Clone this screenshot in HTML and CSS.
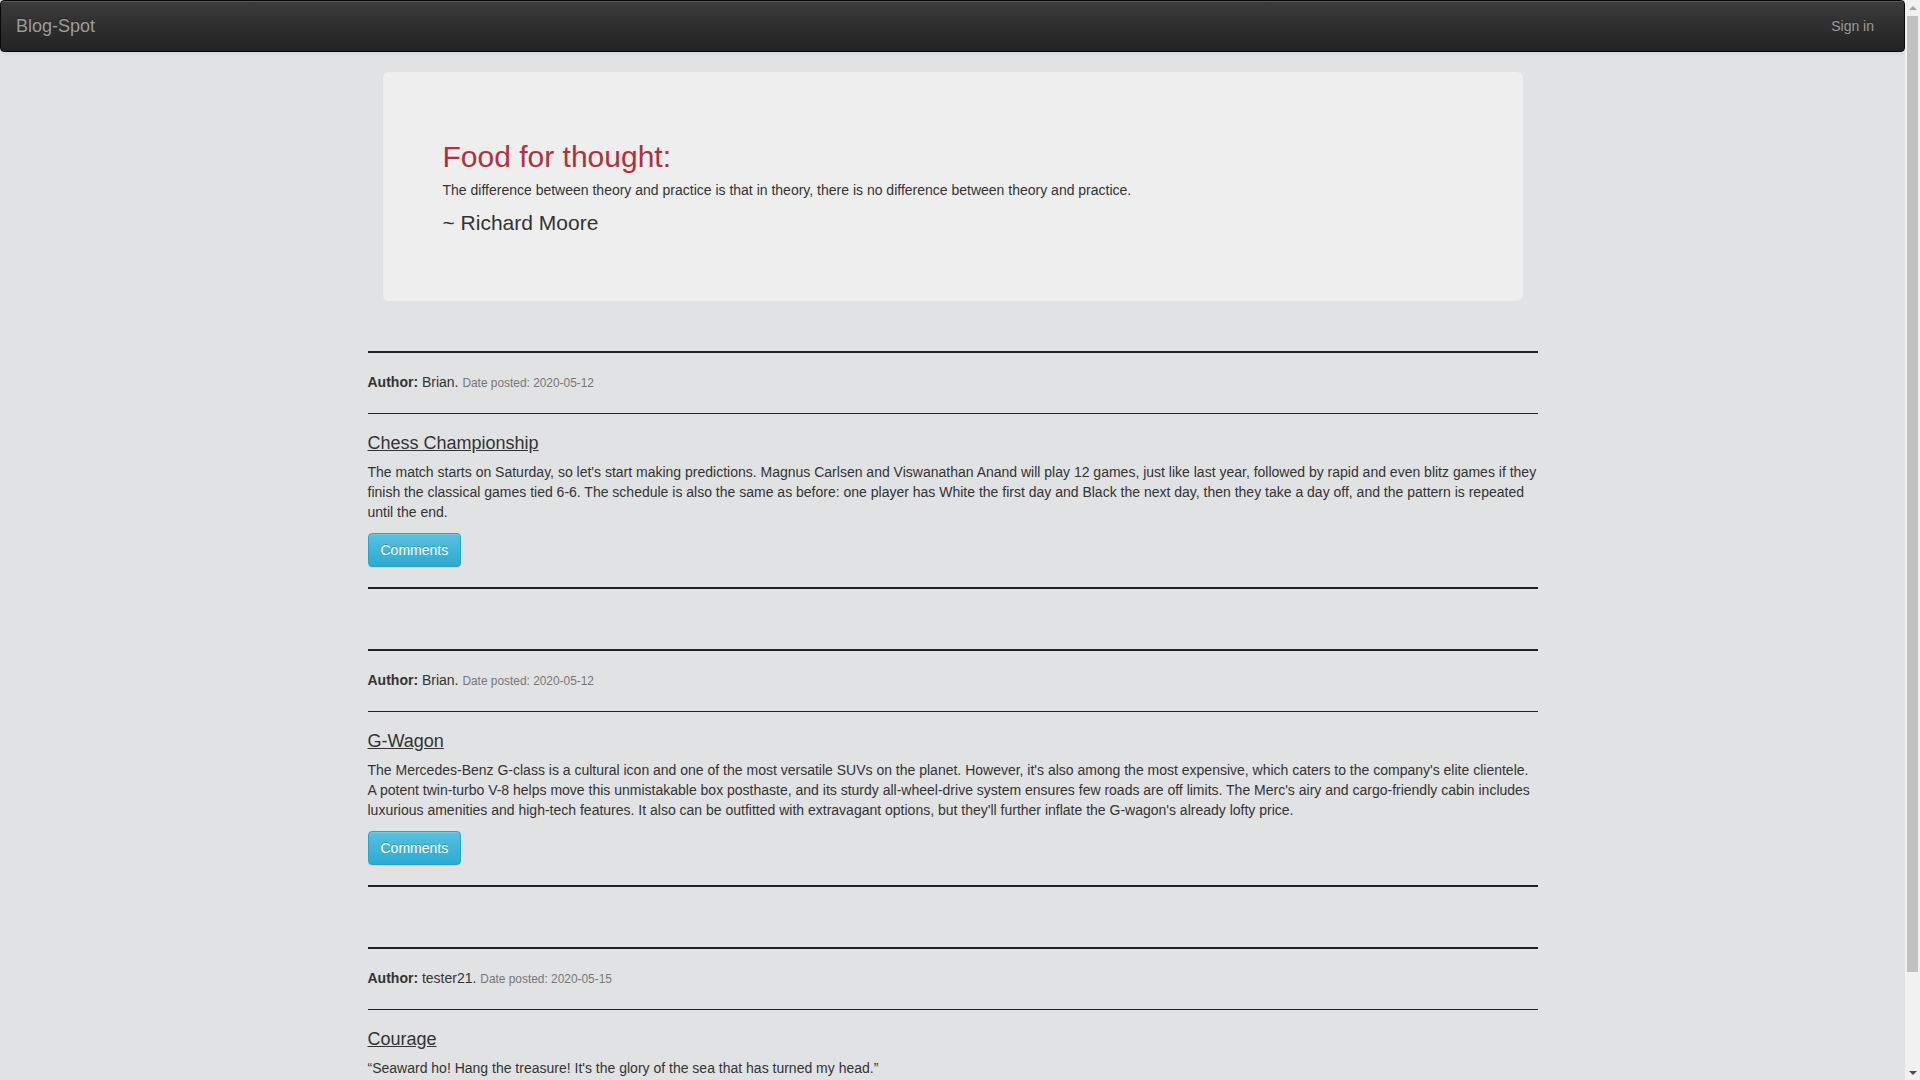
FILE: index.html
```html
<!DOCTYPE html>
<html lang="en">
<head>
<meta charset="utf-8">
<title>Blog-Spot</title>
<link rel="stylesheet" href="styles.css">
</head>
<body>
<div class="page">
  <nav class="navbar">
    <a class="brand" href="#">Blog-Spot</a>
    <a class="signin" href="#">Sign in</a>
  </nav>
  <main class="container">
    <section class="jumbotron">
      <h2 class="jumbo-title">Food for thought:</h2>
      <h5 class="quote">The difference between theory and practice is that in theory, there is no difference between theory and practice.</h5>
      <p class="lead">~ Richard Moore</p>
    </section>
    <div class="post-list">
      <article class="post">
        <hr class="thick">
        <p class="meta"><strong>Author:</strong> Brian. <small class="date">Date posted: 2020-05-12</small></p>
        <hr class="thin">
        <h4 class="title"><a href="#">Chess Championship</a></h4>
        <p class="body">The match starts on Saturday, so let's start making predictions. Magnus Carlsen and Viswanathan Anand will play 12 games, just like last year, followed by rapid and even blitz games if they finish the classical games tied 6-6. The schedule is also the same as before: one player has White the first day and Black the next day, then they take a day off, and the pattern is repeated until the end.</p>
        <div class="actions"><a class="btn" href="#">Comments</a></div>
        <hr class="thick bottom">
      </article>
      <article class="post">
        <hr class="thick">
        <p class="meta"><strong>Author:</strong> Brian. <small class="date">Date posted: 2020-05-12</small></p>
        <hr class="thin">
        <h4 class="title"><a href="#">G-Wagon</a></h4>
        <p class="body">The Mercedes-Benz G-class is a cultural icon and one of the most versatile SUVs on the planet. However, it's also among the most expensive, which caters to the company's elite clientele. A potent twin-turbo V-8 helps move this unmistakable box posthaste, and its sturdy all-wheel-drive system ensures few roads are off limits. The Merc's airy and cargo-friendly cabin includes luxurious amenities and high-tech features. It also can be outfitted with extravagant options, but they'll further inflate the G-wagon's already lofty price.</p>
        <div class="actions"><a class="btn" href="#">Comments</a></div>
        <hr class="thick bottom">
      </article>
      <article class="post">
        <hr class="thick">
        <p class="meta"><strong>Author:</strong> tester21. <small class="date">Date posted: 2020-05-15</small></p>
        <hr class="thin">
        <h4 class="title"><a href="#">Courage</a></h4>
        <p class="body">“Seaward ho! Hang the treasure! It's the glory of the sea that has turned my head.”</p>
        <div class="actions"><a class="btn" href="#">Comments</a></div>
        <hr class="thick bottom">
      </article>
    </div>
  </main>
</div>
<div class="scrollbar" aria-hidden="true">
  <div class="sb-btn"><span class="arrow-up"></span></div>
  <div class="sb-track"><div class="sb-thumb"></div></div>
  <div class="sb-btn"><span class="arrow-down"></span></div>
</div>
</body>
</html>
```
FILE: styles.css
```css
html, body {
  margin: 0;
  padding: 0;
}
html {
  overflow: hidden;
}
body {
  display: flex;
  height: 100vh;
  overflow: hidden;
  background: #e1e2e4;
  font-family: "Liberation Sans", Arial, Helvetica, sans-serif;
  font-size: 14px;
  line-height: 1.428571;
  color: #333;
}
*, *::before, *::after {
  box-sizing: border-box;
}
.page {
  flex: 1;
  min-width: 0;
  overflow: hidden;
}

/* Fake browser scrollbar */
.scrollbar {
  flex: none;
  width: 15px;
  display: flex;
  flex-direction: column;
  background: #f1f1f1;
}
.sb-btn {
  height: 15px;
  flex: none;
  display: flex;
  align-items: center;
  justify-content: center;
}
.arrow-up {
  width: 0;
  height: 0;
  border-left: 4px solid transparent;
  border-right: 4px solid transparent;
  border-bottom: 4px solid #a3a3a3;
}
.arrow-down {
  width: 0;
  height: 0;
  border-left: 4px solid transparent;
  border-right: 4px solid transparent;
  border-top: 4px solid #505050;
}
.sb-track {
  flex: 1;
  padding: 1px 2px 0;
}
.sb-thumb {
  height: 956px;
  background: #c1c1c1;
}

/* Navbar */
.navbar {
  display: flex;
  justify-content: space-between;
  align-items: flex-start;
  min-height: 52px;
  padding: 0 15px;
  margin-bottom: 20px;
  border: 1px solid #080808;
  border-radius: 4px;
  background: linear-gradient(to bottom, #3c3c3c 0%, #222 100%);
  box-shadow: inset 0 1px 0 rgba(255, 255, 255, 0.15), 0 1px 5px rgba(0, 0, 0, 0.075);
}
.brand {
  padding: 15px 15px 15px 0;
  font-size: 18px;
  line-height: 20px;
  color: #9d9d9d;
  text-decoration: none;
  text-shadow: 0 -1px 0 rgba(0, 0, 0, 0.25);
}
.signin {
  padding: 15px;
  font-size: 14px;
  line-height: 20px;
  color: #9d9d9d;
  text-decoration: none;
  text-shadow: 0 -1px 0 rgba(0, 0, 0, 0.25);
}

/* Container */
.container {
  width: 1170px;
  margin: 0 auto;
  padding: 0 15px;
}

/* Jumbotron */
.jumbotron {
  background: #eee;
  border-radius: 6px;
  padding: 48px 60px;
  margin-bottom: 30px;
}
.jumbo-title {
  margin: 20px 0 10px;
  font-size: 30px;
  line-height: 1.1;
  font-weight: 500;
  color: #b2303d;
}
.quote {
  margin: 10px 0;
  font-size: 14px;
  line-height: 1.1;
  font-weight: 500;
  color: #333;
}
.lead {
  margin: 0 0 15px;
  font-size: 21px;
  line-height: 1.4;
  font-weight: 400;
  color: #333;
}

/* Posts */
.post-list {
  margin: 0 -15px;
  padding-top: 20px;
  padding-bottom: 38px;
}
.post + .post {
  margin-top: 60px;
}
hr {
  height: 0;
  border: 0;
  margin: 0;
}
hr.thick {
  border-top: 2px solid #222;
}
hr.thick.bottom {
  margin-top: 20px;
}
hr.thin {
  border-top: 1px solid #222;
  margin: 20px 0;
}
.meta {
  margin: 20px 0 0;
}
.meta strong {
  font-weight: 700;
}
.date {
  font-size: 85%;
  color: #777;
}
.title {
  margin: 0 0 10px;
  font-size: 18px;
  line-height: 19px;
  font-weight: 500;
}
.title a {
  color: #333;
  text-decoration: underline;
}
.body {
  margin: 0 0 10px;
}
.actions {
  display: flex;
}
.btn {
  display: inline-block;
  padding: 6px 12px;
  font-size: 14px;
  line-height: 20px;
  color: #fff;
  text-decoration: none;
  text-shadow: 0 -1px 0 rgba(0, 0, 0, 0.2);
  background: linear-gradient(to bottom, #5bc0de 0%, #2aabd2 100%);
  border: 1px solid #28a4c9;
  border-radius: 4px;
  box-shadow: inset 0 1px 0 rgba(255, 255, 255, 0.15), 0 1px 1px rgba(0, 0, 0, 0.075);
}
```
